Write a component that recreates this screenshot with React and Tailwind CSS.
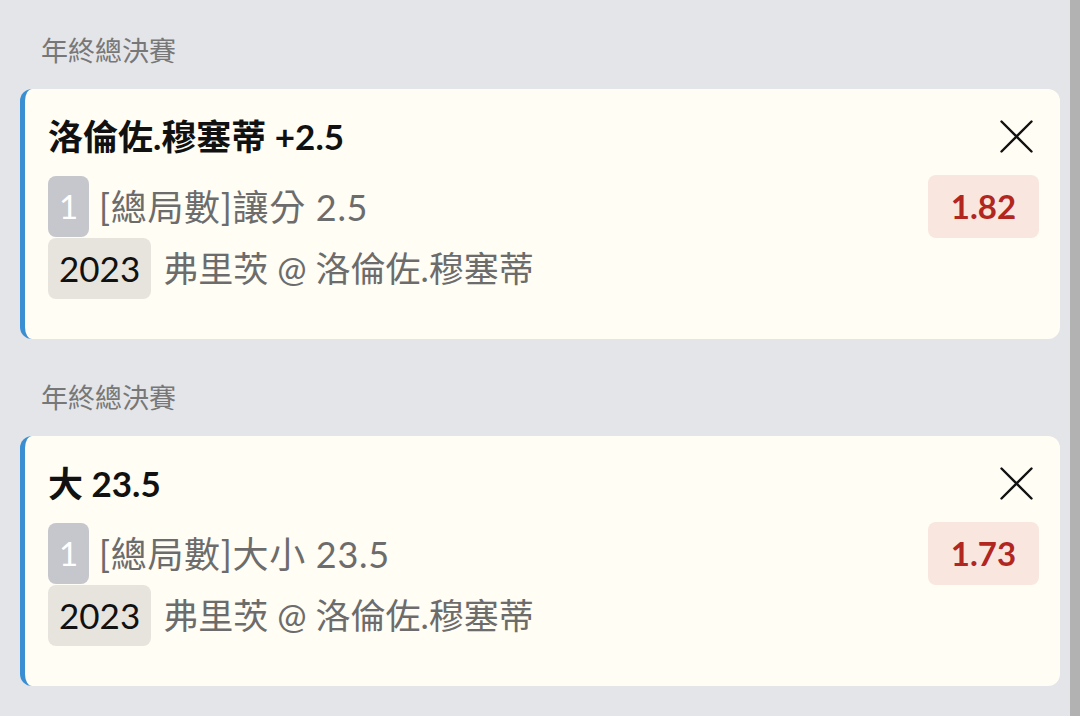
const BETS = [
  {
    league: "年終總決賽",
    title: "洛倫佐.穆塞蒂 +2.5",
    market: "[總局數]讓分 2.5",
    odds: "1.82",
    year: "2023",
    match: "弗里茨 @ 洛倫佐.穆塞蒂",
  },
  {
    league: "年終總決賽",
    title: "大 23.5",
    market: "[總局數]大小 23.5",
    odds: "1.73",
    year: "2023",
    match: "弗里茨 @ 洛倫佐.穆塞蒂",
  },
];

const FONT = { fontFamily: 'Lato, "Noto Sans CJK TC", "Noto Sans", sans-serif' };

// thin close cross
const CloseIcon = () => (
  <svg width="33" height="33" viewBox="0 0 33 33" className="mr-[6px]" fill="none" stroke="#111" strokeWidth="2.4" strokeLinecap="round">
    <path d="M1.5 1.5 L31.5 31.5 M31.5 1.5 L1.5 31.5" />
  </svg>
);

// One slip card
const BetCard = ({ bet }) => (
  <div className="bg-[#fffdf4] rounded-[12px] border-l-[5px] border-[#3a8fd3] pl-[23px] pr-[21px] pt-[27px] pb-[40px]">
    <div className="flex items-center justify-between h-[40px]">
      <h2 className="text-[35px] font-bold text-[#111] leading-[40px]">{bet.title}</h2>
      <CloseIcon />
    </div>
    <div className="mt-[19px] flex items-center justify-between h-[63px]">
      <div className="flex items-center">
        <span className="w-[41px] h-[61px] rounded-[8px] bg-[#c6c6cd] text-white text-[33px] leading-[61px] text-center">1</span>
        <span className="ml-[10px] text-[36px] text-[#6c6c6c] tracking-[0.7px]">{bet.market}</span>
      </div>
      <div className="w-[111px] h-[63px] rounded-[8px] bg-[#f8e6df] flex items-center justify-center text-[33px] font-bold text-[#b1261f]">
        {bet.odds}
      </div>
    </div>
    <div className="flex items-center h-[61px]">
      <span className="h-[61px] px-[11px] rounded-[8px] bg-[#e7e4de] text-[35px] leading-[61px] text-[#111]">{bet.year}</span>
      <span className="ml-[12px] text-[35px] text-[#6c6c6c]">{bet.match}</span>
    </div>
  </div>
);

export default function App() {
  return (
    <div className="flex h-[716px] bg-[#e4e5e9] overflow-hidden" style={FONT}>
      <div className="flex-1 pl-[20px] pr-[10px] pt-[33px] flex flex-col gap-[41px]">
        {BETS.map((bet, i) => (
          <section key={i}>
            <div className="pl-[21px] h-[36px] leading-[36px] text-[27px] text-[#777]">{bet.league}</div>
            <div className="mt-[20px]">
              <BetCard bet={bet} />
            </div>
          </section>
        ))}
      </div>
      <div className="w-[10px] bg-[#b2b2b2]" />
    </div>
  );
}
